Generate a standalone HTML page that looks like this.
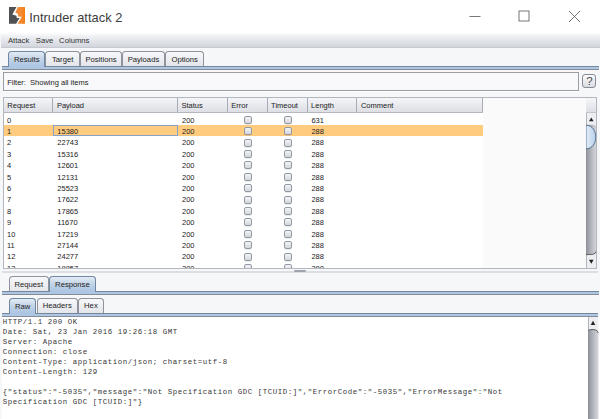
<!DOCTYPE html>
<html><head><meta charset="utf-8"><title>Intruder attack 2</title>
<style>
*{box-sizing:border-box;margin:0;padding:0}
html,body{width:600px;height:419px;overflow:hidden;background:#fff;font-family:"Liberation Sans",sans-serif;}
body{position:relative;color:#222}
.abs{position:absolute}
#title{left:0;top:0;width:600px;height:33px;background:#fff}
#title .t{position:absolute;left:29.2px;top:10px;font-size:12.9px;color:#3c3c3c;white-space:nowrap}
#bg{left:0;top:33px;width:600px;height:386px;background:#f6f7f9}
#menu{left:0.5px;top:32.8px;width:599.5px;height:15.4px;background:linear-gradient(#fdfdfe 0%,#f1f2f5 18%,#e5e7ec 45%,#d9dce3 75%,#cfd2d9 100%);font-size:7.7px;color:#333;box-shadow:inset 0 -0.7px 0 #c3c6cd}
#menu span{position:absolute;top:2.8px;white-space:nowrap}
.tab{position:absolute;font-size:7.7px;color:#222;text-align:center;border:0.9px solid #8e939c;border-bottom:none;border-radius:3.5px 3.5px 0 0;background:linear-gradient(#f7f8fa,#e3e5ea);white-space:nowrap}
.tab.on{background:linear-gradient(#e4ecf5,#c3d4e7 45%,#adc6e3 92%);border-color:#6f87a3;z-index:3}
.bline{position:absolute;left:1.7px;width:597px;height:4.3px;background:#adc6e3;border-top:0.9px solid #76879c;border-bottom:0.8px solid #868b96}
#filter{left:2.8px;top:72px;width:576.2px;height:19px;background:#f9f9fb;border:0.9px solid #9a9da3;font-size:7.5px;color:#222;box-shadow:0 1px 0 #fff}
#filter span{position:absolute;left:3.4px;top:4.6px;white-space:nowrap}
#help{left:582.4px;top:74.2px;width:14.1px;height:14.2px;border:0.9px solid #868b95;border-radius:3px;background:linear-gradient(#fbfbfc,#d9dce2);font-size:11.5px;text-align:center;line-height:12.6px;color:#484848}
#tbl{left:2.8px;top:97.2px;width:594.2px;height:171.40000000000003px;background:#fafafb;overflow:hidden;border:0.9px solid #b3b6bd}
#thead{position:absolute;left:0;top:0;width:479px;height:14.499999999999991px;background:linear-gradient(#f5f6f8,#e9ebef 45%,#dddfe5);border-bottom:0.9px solid #b4b7be}
.th{position:absolute;top:0;height:100%;font-size:7.5px;color:#222;padding:2.7px 0 0 3.5px;border-right:0.9px solid #a9acb4;white-space:nowrap}
#tbody{position:absolute;left:0;top:15.1px;width:479px;height:160px;background:#fff}
.row{position:absolute;left:0;width:479px;height:11.4px;font-size:7.5px;color:#222}
.row.sel{background:#ffcb7f}
.c{position:absolute;top:2.3px;white-space:nowrap}
.cb{position:absolute;top:2.5px;width:8px;height:8px;border:0.9px solid #949aa4;border-radius:2px;background:linear-gradient(#f3f4f6,#d3d6dc);box-shadow:0 0.6px 0.6px rgba(120,125,135,0.35)}
#focus{position:absolute;left:49.5px;top:11.8px;width:125px;height:10.700000000000001px;border:0.9px solid #86a2c9}
.arr{position:absolute;font-size:6.5px;color:#222;line-height:6.5px}
#split{left:1.7px;top:271.1px;width:596.5px;height:1.7px;background:#dcdee4}
#text{left:1.7px;top:316.5px;width:598.3px;height:102.5px;background:#fff}
#text pre{position:absolute;left:1.1px;top:0.6px;font-family:"Liberation Mono",monospace;font-size:7.4px;letter-spacing:0.565px;line-height:10px;color:#383838;white-space:pre}
</style></head><body>
<div id="title" class="abs">
<svg class="abs" style="left:8.75px;top:7.25px" width="16.6" height="16.7" viewBox="0 0 16.6 16.7"><defs><linearGradient id="og" x1="0" x2="1" y1="0" y2="0"><stop offset="0" stop-color="#f3853a"/><stop offset="0.6" stop-color="#f58a30"/><stop offset="1" stop-color="#f57a0a"/></linearGradient><linearGradient id="sbg" x1="0" x2="1" y1="0" y2="0"><stop offset="0" stop-color="#8d9098"/><stop offset="0.5" stop-color="#b4b7be"/><stop offset="1" stop-color="#d6d8de"/></linearGradient></defs><path d="M0 0H7.5L3.3 7.5L7.5 8.8L7.7 11L10.6 11.1L7.1 16.7H0Z" fill="#505153"/><path d="M9 0L6.3 5.5L9 6.8V9.6L12.75 9.85L8.6 16.7H16.6V0Z" fill="url(#og)"/></svg>
<div class="t">Intruder attack 2</div>
<svg class="abs" style="left:460px;top:0" width="140" height="32" viewBox="0 0 140 32"><path d="M9.5 16.5H20.5" stroke="#555" stroke-width="0.8" fill="none"/><rect x="59" y="11" width="10" height="10" stroke="#555" stroke-width="0.8" fill="none"/><path d="M109 11L120 22M120 11L109 22" stroke="#555" stroke-width="0.8" fill="none"/></svg>
</div>
<div id="bg" class="abs"></div>
<div id="menu" class="abs"><span style="left:7.4px">Attack</span><span style="left:35.3px">Save</span><span style="left:58.6px">Columns</span></div>

<div class="tab on" style="left:8.3px;top:50.8px;width:36.9px;height:16.3px;padding-top:3.2px">Results</div>
<div class="tab" style="left:45.2px;top:51.2px;width:35px;height:14.8px;padding-top:2.8px">Target</div>
<div class="tab" style="left:80.2px;top:51.2px;width:41.6px;height:14.8px;padding-top:2.8px">Positions</div>
<div class="tab" style="left:121.8px;top:51.2px;width:43.3px;height:14.8px;padding-top:2.8px">Payloads</div>
<div class="tab" style="left:165.1px;top:51.2px;width:39.2px;height:14.8px;padding-top:2.8px">Options</div>
<div class="bline" style="top:66px"></div>

<div id="filter" class="abs"><span>Filter:&nbsp; Showing all items</span></div>
<div id="help" class="abs">?</div>

<div id="tbl" class="abs">
 <div id="thead">
  <div class="th" style="left:0;width:49.6px">Request</div>
  <div class="th" style="left:49.6px;width:124.6px">Payload</div>
  <div class="th" style="left:174.2px;width:49.8px">Status</div>
  <div class="th" style="left:224px;width:39.8px">Error</div>
  <div class="th" style="left:263.8px;width:40px">Timeout</div>
  <div class="th" style="left:303.8px;width:49.8px">Length</div>
  <div class="th" style="left:353.6px;width:125.4px">Comment</div>
 </div>
 <div id="tbody">
<div class="row" style="top:0.0px"><span class="c" style="left:3.2px">0</span><span class="c" style="left:53.5px"></span><span class="c" style="left:178.2px">200</span><i class="cb" style="left:240.4px"></i><i class="cb" style="left:280.4px"></i><span class="c" style="left:307.6px">631</span></div>
<div class="row sel" style="top:11.4px"><span class="c" style="left:3.2px">1</span><span class="c" style="left:53.5px">15380</span><span class="c" style="left:178.2px">200</span><i class="cb" style="left:240.4px"></i><i class="cb" style="left:280.4px"></i><span class="c" style="left:307.6px">288</span></div>
<div class="row" style="top:22.8px"><span class="c" style="left:3.2px">2</span><span class="c" style="left:53.5px">22743</span><span class="c" style="left:178.2px">200</span><i class="cb" style="left:240.4px"></i><i class="cb" style="left:280.4px"></i><span class="c" style="left:307.6px">288</span></div>
<div class="row" style="top:34.2px"><span class="c" style="left:3.2px">3</span><span class="c" style="left:53.5px">15316</span><span class="c" style="left:178.2px">200</span><i class="cb" style="left:240.4px"></i><i class="cb" style="left:280.4px"></i><span class="c" style="left:307.6px">288</span></div>
<div class="row" style="top:45.6px"><span class="c" style="left:3.2px">4</span><span class="c" style="left:53.5px">12601</span><span class="c" style="left:178.2px">200</span><i class="cb" style="left:240.4px"></i><i class="cb" style="left:280.4px"></i><span class="c" style="left:307.6px">288</span></div>
<div class="row" style="top:57.0px"><span class="c" style="left:3.2px">5</span><span class="c" style="left:53.5px">12131</span><span class="c" style="left:178.2px">200</span><i class="cb" style="left:240.4px"></i><i class="cb" style="left:280.4px"></i><span class="c" style="left:307.6px">288</span></div>
<div class="row" style="top:68.4px"><span class="c" style="left:3.2px">6</span><span class="c" style="left:53.5px">25523</span><span class="c" style="left:178.2px">200</span><i class="cb" style="left:240.4px"></i><i class="cb" style="left:280.4px"></i><span class="c" style="left:307.6px">288</span></div>
<div class="row" style="top:79.8px"><span class="c" style="left:3.2px">7</span><span class="c" style="left:53.5px">17622</span><span class="c" style="left:178.2px">200</span><i class="cb" style="left:240.4px"></i><i class="cb" style="left:280.4px"></i><span class="c" style="left:307.6px">288</span></div>
<div class="row" style="top:91.2px"><span class="c" style="left:3.2px">8</span><span class="c" style="left:53.5px">17865</span><span class="c" style="left:178.2px">200</span><i class="cb" style="left:240.4px"></i><i class="cb" style="left:280.4px"></i><span class="c" style="left:307.6px">288</span></div>
<div class="row" style="top:102.6px"><span class="c" style="left:3.2px">9</span><span class="c" style="left:53.5px">11670</span><span class="c" style="left:178.2px">200</span><i class="cb" style="left:240.4px"></i><i class="cb" style="left:280.4px"></i><span class="c" style="left:307.6px">288</span></div>
<div class="row" style="top:114.0px"><span class="c" style="left:3.2px">10</span><span class="c" style="left:53.5px">17219</span><span class="c" style="left:178.2px">200</span><i class="cb" style="left:240.4px"></i><i class="cb" style="left:280.4px"></i><span class="c" style="left:307.6px">288</span></div>
<div class="row" style="top:125.4px"><span class="c" style="left:3.2px">11</span><span class="c" style="left:53.5px">27144</span><span class="c" style="left:178.2px">200</span><i class="cb" style="left:240.4px"></i><i class="cb" style="left:280.4px"></i><span class="c" style="left:307.6px">288</span></div>
<div class="row" style="top:136.8px"><span class="c" style="left:3.2px">12</span><span class="c" style="left:53.5px">24277</span><span class="c" style="left:178.2px">200</span><i class="cb" style="left:240.4px"></i><i class="cb" style="left:280.4px"></i><span class="c" style="left:307.6px">288</span></div>
<div class="row" style="top:148.2px"><span class="c" style="left:3.2px">13</span><span class="c" style="left:53.5px">18857</span><span class="c" style="left:178.2px">200</span><i class="cb" style="left:240.4px"></i><i class="cb" style="left:280.4px"></i><span class="c" style="left:307.6px">288</span></div>

  <div id="focus"></div>
 </div>
 <svg class="abs" style="left:582.4000000000001px;top:0" width="10.6" height="171" viewBox="0 0 10.6 171">
  <defs><linearGradient id="hg" x1="0" x2="0" y1="0" y2="1"><stop offset="0" stop-color="#f5f6f8"/><stop offset="1" stop-color="#dddfe5"/></linearGradient>
  <linearGradient id="tg" x1="0" x2="1" y1="0" y2="0"><stop offset="0" stop-color="#e3edf8"/><stop offset="1" stop-color="#b7d0ea"/></linearGradient></defs>
  <rect x="0" y="0" width="10.6" height="14.2" fill="url(#hg)"/>
  <rect x="0" y="14.2" width="10.6" height="0.9" fill="#b4b7be"/>
  <rect x="0" y="15.1" width="10.6" height="156" fill="#eceef2"/>
  <rect x="0" y="15.1" width="0.8" height="156" fill="#a4a7ae"/>
  <path d="M0 27.6Q1 26.8 3 26.8H7.6Q10.6 26.8 10.6 29.8V153Q10.6 156.4 6 156.4H0Z" fill="url(#sbg)"/>
  <path d="M0 156.6H5Q10.6 156.6 10.6 151" stroke="#333" stroke-width="0.9" fill="none" opacity="0.8"/>
  <path d="M0 27.2C13 27.2 13 50.8 0 50.8Z" fill="url(#tg)" stroke="#3f5d80" stroke-width="0.8"/>
  <path d="M5.3 19.4L7.6 23.3H3Z" fill="#222"/>
  <path d="M3 161.8H7.6L5.3 165.7Z" fill="#222"/>
 </svg>
</div>
<div id="split" class="abs"></div>
<div class="abs" style="left:294px;top:270.3px;width:12px;height:1.6px;background:#9fa3ab;border-radius:1px"></div>

<div class="tab" style="left:8.6px;top:276.4px;width:40.3px;height:15.2px;padding-top:2.4px">Request</div>
<div class="tab on" style="left:48.9px;top:276px;width:47px;height:16.4px;padding-top:2.8px">Response</div>
<div class="bline" style="top:291.3px;height:3.9px"></div>

<div class="tab on" style="left:8.9px;top:297.5px;width:27.6px;height:16.2px;padding-top:3.0px">Raw</div>
<div class="tab" style="left:36.5px;top:297.9px;width:41.5px;height:14.9px;padding-top:2.6px">Headers</div>
<div class="tab" style="left:78px;top:297.9px;width:25.8px;height:14.9px;padding-top:2.6px">Hex</div>
<div class="bline" style="top:312.6px;height:4px;width:596.6px"></div>

<div id="text" class="abs"><pre>HTTP/1.1 200 OK
Date: Sat, 23 Jan 2016 19:26:18 GMT
Server: Apache
Connection: close
Content-Type: application/json; charset=utf-8
Content-Length: 129

{"status":"-5035","message":"Not Specification GDC [TCUID:]","ErrorCode":"-5035","ErrorMessage":"Not
Specification GDC [TCUID:]"}</pre>
 <svg class="abs" style="left:586.6px;top:0" width="10.4" height="102.5" viewBox="0 0 10.4 102.5">
  <rect x="0" y="0" width="10.4" height="102.5" fill="#eceef2"/>
  <rect x="0" y="0" width="0.8" height="102.5" fill="#a4a7ae"/>
  <path d="M0 16Q0 12.4 4 12.4H6.4Q10.4 12.4 10.4 16.4V102.5H0Z" fill="url(#sbg)"/>
  <path d="M0 13.4Q2 12.4 5 12.4Q9.5 12.4 10.4 16" stroke="#333" stroke-width="0.9" fill="none" opacity="0.8"/>
  <path d="M5 3.8L7.3 8H2.7Z" fill="#222"/>
 </svg>
</div>
</body></html>
